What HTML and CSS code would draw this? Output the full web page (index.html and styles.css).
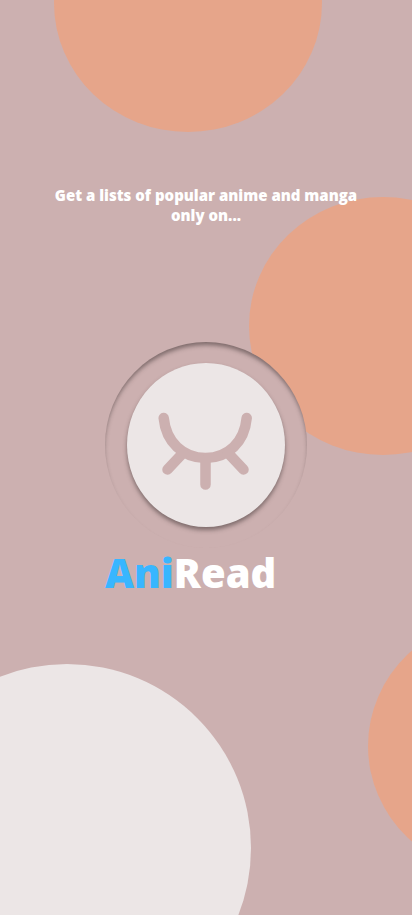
FILE: index.html
```html
<!DOCTYPE html>
<html lang="en">
<head>
<meta charset="utf-8">
<meta name="viewport" content="width=device-width, initial-scale=1">
<title>AniRead</title>
<link rel="stylesheet" href="styles.css">
</head>
<body>
<main class="splash">
  <div class="bubble bubble-top"></div>
  <div class="bubble bubble-middle"></div>
  <div class="bubble bubble-right"></div>
  <div class="bubble bubble-light"></div>
  <p class="tagline">Get a lists of popular anime and manga only on...</p>
  <div class="brand">
    <div class="ring">
      <div class="disc">
        <svg class="eye" viewBox="0 0 96 84" fill="none" stroke="#ccb0b0" stroke-linecap="round" aria-hidden="true">
          <path d="M5.700 8C8 32 25 48 47.500 48S86.500 32 88.700 8" stroke-width="10.500"/>
          <path d="M25 43L9.500 59.500M47.500 50V74.500M70 43L85.500 59.500" stroke-width="10.500"/>
        </svg>
      </div>
    </div>
    <h1 class="name"><span class="name-accent">Ani</span>Read</h1>
  </div>
</main>
</body>
</html>
```
FILE: styles.css
```css
:root {
  --rose: #ccb0b0;
  --peach: #e6a58a;
  --mist: #ece6e6;
  --blue: #38b6ff;
}

body {
  margin: 0;
  font-family: "Open Sans", sans-serif;
  font-weight: 800;
  color: #fff;
  background: var(--rose);
}

.splash {
  position: relative;
  display: flex;
  flex-direction: column;
  align-items: center;
  box-sizing: border-box;
  min-height: 100vh;
  padding: 185px 48px 48px;
  overflow: hidden;
}

/* Decorative shapes behind the content */
.bubble {
  position: absolute;
  width: 268px;
  height: 258px;
  border-radius: 50%;
  background: var(--peach);
}

.bubble-top {
  top: -126px;
  left: 54px;
}

.bubble-middle {
  top: 197px;
  right: -105px;
}

.bubble-right {
  top: 617px;
  right: -224px;
}

.bubble-light {
  top: 664px;
  left: -117px;
  width: 368px;
  height: 368px;
  background: var(--mist);
}

.tagline {
  position: relative;
  margin: 0 0 117px;
  font-size: 15px;
  line-height: 20px;
  text-align: center;
}

.brand {
  position: relative;
}

.ring {
  display: grid;
  place-items: center;
  width: 202px;
  height: 206px;
  border-radius: 50%;
  background: var(--rose);
  box-shadow: inset 0 4px 4px -1px rgba(50, 40, 40, 0.5);
}

.disc {
  display: grid;
  justify-items: center;
  align-content: start;
  box-sizing: border-box;
  width: 158px;
  height: 164px;
  padding-top: 47px;
  border-radius: 50%;
  background: var(--mist);
  box-shadow: 0 3px 4px rgba(50, 40, 40, 0.5);
}

.eye {
  width: 96px;
  height: 84px;
}

.name {
  margin: 0;
  font-size: 40px;
  line-height: 50px;
  font-weight: 800;
}

.name-accent {
  color: var(--blue);
}
```
